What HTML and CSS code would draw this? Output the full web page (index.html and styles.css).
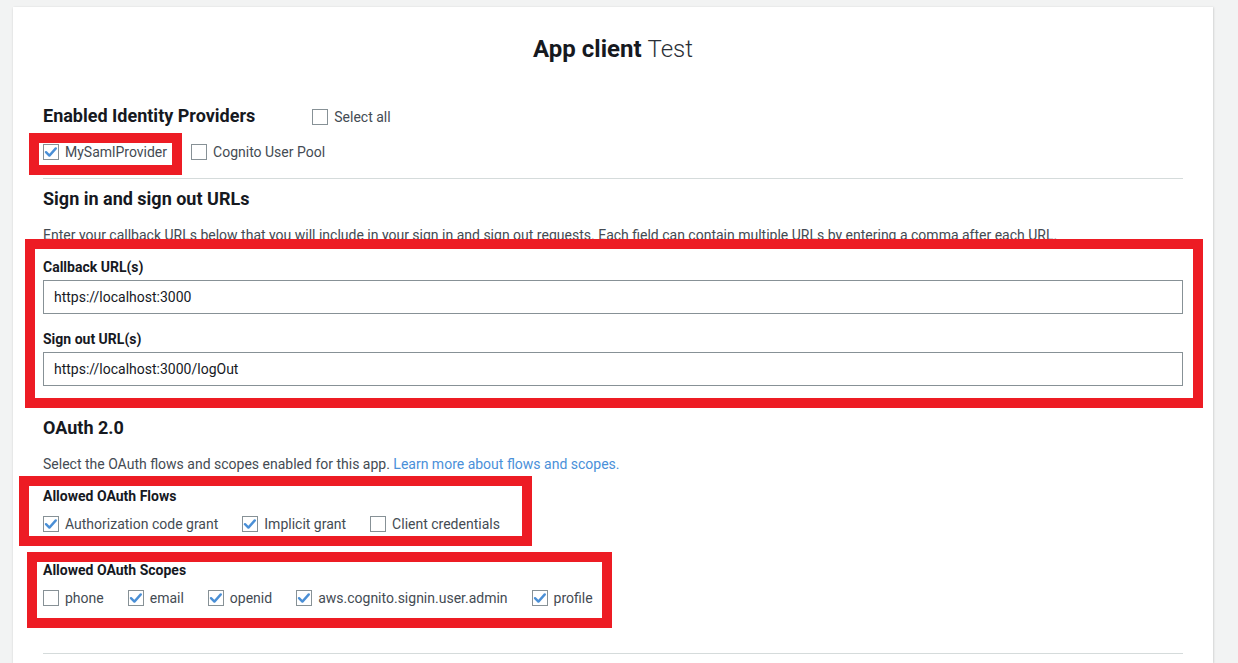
FILE: index.html
```html
<!DOCTYPE html>
<html lang="en">
<head>
<meta charset="utf-8">
<title>App client Test</title>
<link rel="stylesheet" href="styles.css">
</head>
<body>
<div class="page">
  <div class="card">
    <h1 class="title"><span class="title-strong">App client</span> <span class="title-light">Test</span></h1>

    <div class="idp-head">
      <h2 class="heading">Enabled Identity Providers</h2>
      <label class="check select-all"><span class="box"></span><span>Select all</span></label>
    </div>
    <div class="check-row idp-row">
      <label class="check"><span class="box checked"><svg viewBox="0 0 16 16"><path d="M3 8.2 L6.4 11.6 L12.8 4.4"/></svg></span><span>MySamlProvider</span></label>
      <label class="check"><span class="box"></span><span>Cognito User Pool</span></label>
    </div>

    <hr class="divider first">

    <h2 class="heading urls-head">Sign in and sign out URLs</h2>
    <p class="desc urls-desc">Enter your callback URLs below that you will include in your sign in and sign out requests. Each field can contain multiple URLs by entering a comma after each URL.</p>

    <div class="field callback">
      <div class="field-label">Callback URL(s)</div>
      <div class="input">https://localhost:3000</div>
    </div>
    <div class="field signout">
      <div class="field-label">Sign out URL(s)</div>
      <div class="input">https://localhost:3000/logOut</div>
    </div>

    <h2 class="heading oauth-head">OAuth 2.0</h2>
    <p class="desc oauth-desc">Select the OAuth flows and scopes enabled for this app. <a class="link" href="#">Learn more about flows and scopes.</a></p>

    <div class="field-label flows-label">Allowed OAuth Flows</div>
    <div class="check-row">
      <label class="check"><span class="box checked"><svg viewBox="0 0 16 16"><path d="M3 8.2 L6.4 11.6 L12.8 4.4"/></svg></span><span>Authorization code grant</span></label>
      <label class="check"><span class="box checked"><svg viewBox="0 0 16 16"><path d="M3 8.2 L6.4 11.6 L12.8 4.4"/></svg></span><span>Implicit grant</span></label>
      <label class="check"><span class="box"></span><span>Client credentials</span></label>
    </div>

    <div class="field-label scopes-label">Allowed OAuth Scopes</div>
    <div class="check-row">
      <label class="check"><span class="box"></span><span>phone</span></label>
      <label class="check"><span class="box checked"><svg viewBox="0 0 16 16"><path d="M3 8.2 L6.4 11.6 L12.8 4.4"/></svg></span><span>email</span></label>
      <label class="check"><span class="box checked"><svg viewBox="0 0 16 16"><path d="M3 8.2 L6.4 11.6 L12.8 4.4"/></svg></span><span>openid</span></label>
      <label class="check"><span class="box checked"><svg viewBox="0 0 16 16"><path d="M3 8.2 L6.4 11.6 L12.8 4.4"/></svg></span><span>aws.cognito.signin.user.admin</span></label>
      <label class="check"><span class="box checked"><svg viewBox="0 0 16 16"><path d="M3 8.2 L6.4 11.6 L12.8 4.4"/></svg></span><span>profile</span></label>
    </div>

    <hr class="divider last">

    <div class="mark mark-idp"></div>
    <div class="mark mark-urls"></div>
    <div class="mark mark-flows"></div>
    <div class="mark mark-scopes"></div>
  </div>
</div>
</body>
</html>
```

FILE: styles.css
```css
* { box-sizing: border-box; }

html, body {
  margin: 0;
  padding: 0;
  height: 100%;
  overflow: hidden;
  background: #f2f3f3;
}

body {
  font-family: Roboto, "Liberation Sans", Arial, sans-serif;
  font-size: 14px;
  color: #444b53;
}

.page {
  padding: 7px 0 0 13px;
}

.card {
  position: relative;
  width: 1200px;
  height: 656px;
  overflow: hidden;
  background: #ffffff;
  box-shadow: 0 1px 2px rgba(0, 0, 0, 0.12), 1px 0 2px rgba(0, 0, 0, 0.08);
  padding: 26px 30px 0 30px;
}

.title {
  margin: 0;
  text-align: center;
  font-size: 24px;
  line-height: 32px;
  color: #16191f;
  font-weight: 400;
}
.title-strong { font-weight: 700; }
.title-light { font-weight: 300; color: #2a2f36; }

.heading {
  margin: 0;
  font-size: 18px;
  line-height: 24px;
  font-weight: 700;
  color: #16191f;
}

.idp-head {
  display: flex;
  align-items: center;
  margin-top: 39px;
}
.select-all { margin-left: 57px; margin-top: 2px; }

.check-row {
  display: flex;
  align-items: center;
  height: 20px;
  margin-top: 8px;
}
.idp-row { margin-top: 14px; }

.check {
  display: flex;
  align-items: center;
  gap: 6px;
  margin-right: 24px;
  line-height: 20px;
  color: #444b53;
  white-space: nowrap;
}

.box {
  width: 16px;
  height: 16px;
  border: 1px solid #879196;
  background: #fff;
  display: inline-flex;
  position: relative;
  flex: none;
}
.box svg {
  position: absolute;
  left: -1px;
  top: -1px;
  width: 16px;
  height: 16px;
}
.box svg path {
  fill: none;
  stroke: #4a8fd6;
  stroke-width: 2.4;
  stroke-linecap: round;
  stroke-linejoin: round;
}

.divider {
  border: 0;
  border-top: 1px solid #d5dbdb;
  margin: 0;
  height: 0;
}
.divider.first { margin-top: 16px; }
.divider.last { margin-top: 45px; }

.urls-head { margin-top: 8px; }

.desc {
  margin: 0;
  line-height: 20px;
  white-space: nowrap;
}
.urls-desc { margin-top: 14px; }

.field-label {
  font-weight: 700;
  line-height: 20px;
  color: #16191f;
}

.field.callback { margin-top: 12px; }
.field.signout { margin-top: 15px; }

.input {
  margin-top: 3px;
  height: 34px;
  border: 1px solid #879196;
  padding: 0 10px;
  line-height: 32px;
  color: #16191f;
}

.oauth-head { margin-top: 30px; }
.oauth-desc { margin-top: 14px; }

.link {
  color: #4a90d9;
  text-decoration: none;
}

.flows-label { margin-top: 12px; }
.scopes-label { margin-top: 26px; }

.mark {
  position: absolute;
  border: 10px solid #ed1c24;
  pointer-events: none;
}
.mark-idp { left: 16px; top: 126px; width: 153px; height: 42px; }
.mark-urls { left: 12px; top: 232px; width: 1178px; height: 169px; }
.mark-flows { left: 6px; top: 469px; width: 513px; height: 70px; }
.mark-scopes { left: 14px; top: 545px; width: 585px; height: 76px; }
```
